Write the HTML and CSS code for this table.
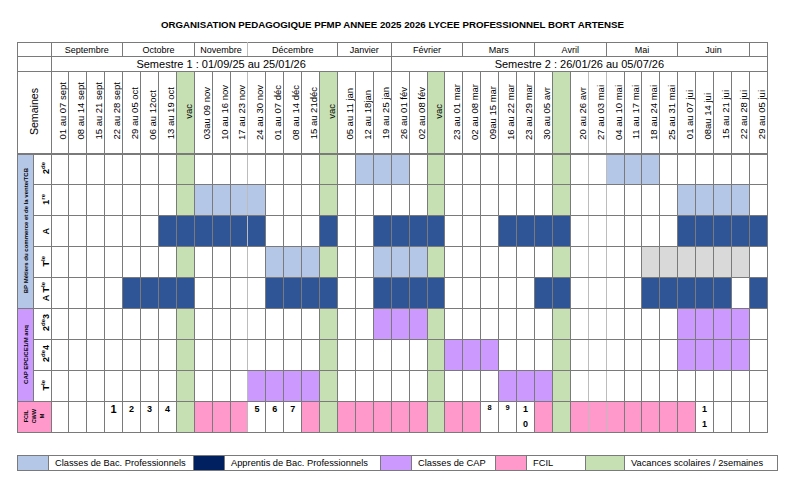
FILE: index.html
```html
<!DOCTYPE html>
<html lang="fr">
<head>
<meta charset="utf-8">
<title>Organisation pédagogique PFMP 2025 2026</title>
<link rel="stylesheet" href="styles.css">
</head>
<body>
<div class="sheet">
  <h1 class="title">ORGANISATION PEDAGOGIQUE PFMP ANNEE 2025 2026 LYCEE PROFESSIONNEL BORT ARTENSE</h1>
  <table class="plan">
    <colgroup><col class="ca"><col class="cb"><col span="40"></colgroup>
    <tr class="rm">
      <td colspan="2"></td>
      <td colspan="4">Septembre</td><td colspan="4">Octobre</td><td colspan="3" class="soft">Novembre</td><td colspan="5">Décembre</td><td colspan="3">Janvier</td>
      <td colspan="4">Février</td><td colspan="4">Mars</td><td colspan="4">Avril</td><td colspan="4">Mai</td><td colspan="4">Juin</td><td></td>
    </tr>
    <tr class="rs">
      <td colspan="2"></td>
      <td colspan="19">Semestre 1 : 01/09/25 au 25/01/26</td>
      <td colspan="21">Semestre 2 : 26/01/26 au 05/07/26</td>
    </tr>
    <tr class="rw">
      <td colspan="2" class="sem"><span>Semaines</span></td>
      <td class="wk"><span>01 au 07 sept</span></td>
      <td class="wk"><span>08 au 14 sept</span></td>
      <td class="wk"><span>15 au 21 sept</span></td>
      <td class="wk"><span>22 au 28 sept</span></td>
      <td class="wk"><span>29 au 05 oct</span></td>
      <td class="wk"><span>06 au 12oct</span></td>
      <td class="wk"><span>13 au 19 oct</span></td>
      <td class="wk g vc"><span>vac</span></td>
      <td class="wk"><span>03au 09 nov</span></td>
      <td class="wk"><span>10 au 16 nov</span></td>
      <td class="wk"><span>17 au 23 nov</span></td>
      <td class="wk"><span>24 au 30 nov</span></td>
      <td class="wk"><span>01 au 07 déc</span></td>
      <td class="wk"><span>08 au 14 déc</span></td>
      <td class="wk"><span>15 au 21déc</span></td>
      <td class="wk g vc"><span>vac</span></td>
      <td class="wk"><span>05 au 11 jan</span></td>
      <td class="wk"><span>12 au 18jan</span></td>
      <td class="wk"><span>19 au 25 jan</span></td>
      <td class="wk"><span>26 au 01 fév</span></td>
      <td class="wk"><span>02 au 08 fév</span></td>
      <td class="wk g vc"><span>vac</span></td>
      <td class="wk"><span>23 au 01 mar</span></td>
      <td class="wk"><span>02 au 08 mar</span></td>
      <td class="wk"><span>09au 15 mar</span></td>
      <td class="wk"><span>16 au 22 mar</span></td>
      <td class="wk"><span>23 au 29 mar</span></td>
      <td class="wk"><span>30 au 05 avr</span></td>
      <td class="wk g"></td>
      <td class="wk"><span>20 au 26 avr</span></td>
      <td class="wk"><span>27 au 03 mai</span></td>
      <td class="wk"><span>04 au 10 mai</span></td>
      <td class="wk"><span>11 au 17 mai</span></td>
      <td class="wk"><span>18 au 24 mai</span></td>
      <td class="wk"><span>25 au 31 mai</span></td>
      <td class="wk"><span>01 au 07 jui</span></td>
      <td class="wk"><span>08au 14 jui</span></td>
      <td class="wk"><span>15 au 21 jui</span></td>
      <td class="wk"><span>22 au 28 jui</span></td>
      <td class="wk"><span>29 au 05 jui</span></td>
    </tr>

    <!-- BP -->
    <tr class="rb first">
      <td rowspan="5" class="gl l"><span>BP Métiers du commerce et de la vente/TCB</span></td>
      <td class="sl"><span>2<sup>de</sup></span></td>
      <td></td><td></td><td></td><td></td><td></td><td></td><td></td><td class="g"></td>
      <td></td><td></td><td></td><td></td><td></td><td></td><td></td><td class="g"></td>
      <td></td><td class="l"></td><td class="l"></td><td class="l"></td><td></td><td class="g"></td>
      <td></td><td></td><td></td><td></td><td></td><td></td><td class="g"></td>
      <td></td><td></td><td class="l"></td><td class="l"></td><td class="l"></td>
      <td></td><td></td><td></td><td></td><td></td><td></td>
    </tr>
    <tr class="rb">
      <td class="sl"><span>1<sup>re</sup></span></td>
      <td></td><td></td><td></td><td></td><td></td><td></td><td></td><td class="g"></td>
      <td class="l"></td><td class="l"></td><td class="l"></td><td class="l"></td><td></td><td></td><td></td><td class="g"></td>
      <td></td><td></td><td></td><td></td><td></td><td class="g"></td>
      <td></td><td></td><td></td><td></td><td></td><td></td><td class="g"></td>
      <td></td><td></td><td></td><td></td><td></td><td></td>
      <td class="l"></td><td class="l"></td><td class="l"></td><td class="l"></td><td></td>
    </tr>
    <tr class="rb">
      <td class="sl"><span>A</span></td>
      <td></td><td></td><td></td><td></td><td></td><td></td><td class="d"></td><td class="d"></td>
      <td class="d"></td><td class="d"></td><td class="d"></td><td class="d"></td><td></td><td></td><td></td><td class="d"></td>
      <td></td><td></td><td class="d"></td><td class="d"></td><td class="d"></td><td class="d"></td>
      <td></td><td></td><td></td><td class="d"></td><td class="d"></td><td class="d"></td><td class="d"></td>
      <td></td><td></td><td></td><td></td><td></td><td></td>
      <td class="d"></td><td class="d"></td><td class="d"></td><td class="d"></td><td class="d"></td>
    </tr>
    <tr class="rb">
      <td class="sl"><span>T<sup>le</sup></span></td>
      <td></td><td></td><td></td><td></td><td></td><td></td><td></td><td class="g"></td>
      <td></td><td></td><td></td><td></td><td class="l"></td><td class="l"></td><td class="l"></td><td class="g"></td>
      <td></td><td></td><td class="l"></td><td class="l"></td><td class="l"></td><td class="g"></td>
      <td></td><td></td><td></td><td></td><td></td><td></td><td class="g"></td>
      <td></td><td></td><td></td><td></td><td class="y"></td><td class="y"></td>
      <td class="y"></td><td class="y"></td><td class="y"></td><td class="y"></td><td></td>
    </tr>
    <tr class="rb">
      <td class="sl"><span>A T<sup>le</sup></span></td>
      <td></td><td></td><td></td><td></td><td class="d"></td><td class="d"></td><td class="d"></td><td class="d"></td>
      <td></td><td></td><td></td><td></td><td class="d"></td><td class="d"></td><td class="d"></td><td class="d"></td>
      <td></td><td></td><td class="d"></td><td class="d"></td><td class="d"></td><td class="d"></td>
      <td></td><td></td><td></td><td></td><td></td><td class="d"></td><td class="d"></td>
      <td></td><td></td><td></td><td></td><td class="d"></td><td class="d"></td>
      <td class="d"></td><td class="d"></td><td class="d"></td><td></td><td class="d"></td>
    </tr>

    <!-- CAP -->
    <tr class="rb">
      <td rowspan="3" class="gl p"><span>CAP EPC/CE1/M anq</span></td>
      <td class="sl"><span>2<sup>de</sup>3</span></td>
      <td></td><td></td><td></td><td></td><td></td><td></td><td></td><td class="g"></td>
      <td></td><td></td><td></td><td></td><td></td><td></td><td></td><td class="g"></td>
      <td></td><td></td><td class="p"></td><td class="p"></td><td class="p"></td><td class="g"></td>
      <td></td><td></td><td></td><td></td><td></td><td></td><td class="g"></td>
      <td></td><td></td><td></td><td></td><td></td><td></td>
      <td class="p"></td><td class="p"></td><td class="p"></td><td class="p"></td><td></td>
    </tr>
    <tr class="rb">
      <td class="sl"><span>2<sup>de</sup>4</span></td>
      <td></td><td></td><td></td><td></td><td></td><td></td><td></td><td class="g"></td>
      <td></td><td></td><td></td><td></td><td></td><td></td><td></td><td class="g"></td>
      <td></td><td></td><td></td><td></td><td></td><td class="g"></td>
      <td class="p"></td><td class="p"></td><td class="p"></td><td></td><td></td><td></td><td class="g"></td>
      <td></td><td></td><td></td><td></td><td></td><td></td>
      <td class="p"></td><td class="p"></td><td class="p"></td><td class="p"></td><td></td>
    </tr>
    <tr class="rb">
      <td class="sl"><span>T<sup>le</sup></span></td>
      <td></td><td></td><td></td><td></td><td></td><td></td><td></td><td class="g"></td>
      <td></td><td></td><td></td><td class="p"></td><td class="p"></td><td class="p"></td><td class="p"></td><td class="g"></td>
      <td></td><td></td><td></td><td></td><td></td><td class="g"></td>
      <td></td><td></td><td></td><td class="p"></td><td class="p"></td><td class="p"></td><td class="g"></td>
      <td></td><td></td><td></td><td></td><td></td><td></td>
      <td></td><td></td><td></td><td></td><td></td>
    </tr>

    <!-- FCIL -->
    <tr class="rb last">
      <td colspan="2" class="fl k"><span>FCIL<br>CWW<br>M</span></td>
      <td></td><td></td><td></td><td class="n big">1</td><td class="n">2</td><td class="n">3</td><td class="n">4</td><td class="g"></td>
      <td class="k"></td><td class="k"></td><td class="k"></td><td class="n">5</td><td class="n">6</td><td class="n">7</td><td class="k"></td><td class="g"></td>
      <td class="k"></td><td class="k"></td><td class="k"></td><td class="k"></td><td class="k"></td><td class="g"></td>
      <td class="k"></td><td class="k"></td><td class="n sm">8</td><td class="n sm">9</td><td class="n">1<br>0</td><td class="k"></td><td class="g"></td>
      <td class="k"></td><td class="k"></td><td class="k"></td><td class="k"></td><td class="k"></td><td class="k"></td>
      <td class="k"></td><td class="n">1<br>1</td><td></td><td></td><td></td>
    </tr>
  </table>

  <table class="legend">
    <tr>
      <td class="sw l"></td><td class="lt t1">Classes de Bac. Professionnels</td>
      <td class="sw nv"></td><td class="lt t2">Apprentis de Bac. Professionnels</td>
      <td class="sw p"></td><td class="lt t3">Classes de CAP</td>
      <td class="sw k"></td><td class="lt t4">FCIL</td>
      <td class="sw g sw5"></td><td class="lt t5">Vacances scolaires / 2semaines</td>
    </tr>
  </table>
</div>
</body>
</html>
```

FILE: styles.css
```css
body {
  margin: 0;
  background: #ffffff;
  color: #000000;
  font-family: "Liberation Sans", Arial, sans-serif;
}

.sheet {
  width: 751px;
  margin-left: 17px;
}

.title {
  margin: 0;
  height: 42px;
  box-sizing: border-box;
  padding-top: 19px;
  font-size: 9.7px;
  line-height: 12px;
  font-weight: bold;
  text-align: center;
}

.plan {
  border-collapse: collapse;
  table-layout: fixed;
  width: 751px;
}

.plan col.ca { width: 16px; }
.plan col.cb { width: 17.5px; }

.plan td {
  border: 1px solid #7a7a7a;
  padding: 0;
  background: #ffffff;
  overflow: hidden;
}

/* lighter grid lines seen in the sheet (between some week columns) */
.rw td:nth-last-child(30),
.rb td:nth-last-child(30),
.rw td:nth-last-child(11),
.rb td:nth-last-child(11),
.rw td:nth-last-child(10),
.rb td:nth-last-child(10),
.rm td.soft {
  border-right-color: #bcbcbc;
}

.rm { height: 14px; }
.rm td {
  font-size: 9px;
  line-height: 12px;
  text-align: center;
  white-space: nowrap;
}

.rs { height: 15px; }
.rs td {
  font-size: 11px;
  line-height: 13px;
  text-align: center;
  white-space: nowrap;
}

.rw { height: 82px; }
.rw td { border-bottom-width: 2px; }

.wk {
  vertical-align: bottom;
  text-align: right;
  font-size: 9.5px;
  padding-bottom: 11px !important;
}
.wk span,
.sem span,
.gl span,
.sl span,
.fl span {
  display: inline-block;
  writing-mode: vertical-rl;
  transform: rotate(180deg);
  white-space: nowrap;
}
.wk span { line-height: 11px; }
.wk.vc {
  vertical-align: middle;
  padding-bottom: 0 !important;
}

.sem {
  text-align: center;
  vertical-align: middle;
  font-size: 10.6px;
}
.sem span { line-height: 13px; }

.rb { height: 31px; }

.gl {
  text-align: center;
  vertical-align: middle;
  font-size: 6px;
  font-weight: bold;
}
.gl span { line-height: 8px; }

.sl {
  text-align: right;
  vertical-align: middle;
  font-size: 9px;
  font-weight: bold;
}
.sl span { line-height: 10px; }
.sl sup {
  font-size: 6px;
  vertical-align: 3px;
}

.fl {
  text-align: center;
  vertical-align: middle;
  font-size: 5.5px;
  font-weight: bold;
}
.fl span { line-height: 8px; text-align: center; }

.n {
  vertical-align: top;
  text-align: center;
  font-size: 9px;
  line-height: 15px;
  font-weight: bold;
}
.n.big { font-size: 11px; }
.n.sm { font-size: 7.5px; line-height: 12px; }

.plan td.g { background: #c6e0b4; }
.plan td.l { background: #b4c7e7; }
.plan td.d { background: #2f5597; }
.plan td.p { background: #cc99ff; }
.plan td.k { background: #ff99cc; }
.plan td.y { background: #d9d9d9; }

.legend {
  border-collapse: collapse;
  table-layout: fixed;
  width: 752px;
  margin-top: 22px;
}
.legend td {
  border: 1px solid #7a7a7a;
  height: 14px;
  padding: 0;
  font-size: 9.3px;
  line-height: 14px;
  white-space: nowrap;
}
.legend .sw { width: 30px; }
.legend .sw5 { width: 38px; }
.legend .lt { padding-left: 6px; }
.legend .t1 { width: 138px; }
.legend .t2 { width: 149px; }
.legend .t3 { width: 77px; }
.legend .t4 { width: 52px; }
.legend .t5 { width: 146px; }
.legend .l { background: #b4c7e7; }
.legend .nv { background: #002060; }
.legend .p { background: #cc99ff; }
.legend .k { background: #ff99cc; }
.legend .g { background: #c6e0b4; }
```
